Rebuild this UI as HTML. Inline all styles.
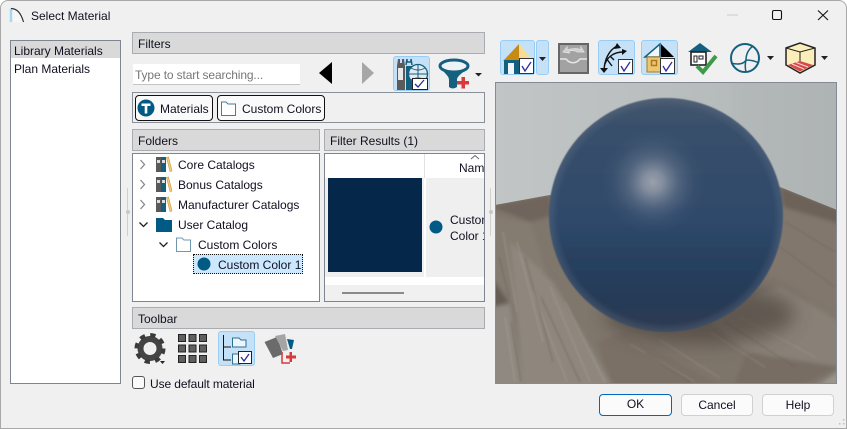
<!DOCTYPE html>
<html><head><meta charset="utf-8"><style>
html,body{margin:0;padding:0;width:847px;height:429px;overflow:hidden;background:#fff}
*{box-sizing:border-box}
body{font:12px "Liberation Sans",sans-serif;color:#101020;position:relative}
#w{position:absolute;left:0;top:0;width:847px;height:429px;background:#f0f0f0;border:1px solid #a8a8a8;border-radius:8px 8px 0 0;overflow:hidden}
.a{position:absolute}
.t{position:absolute;white-space:nowrap;line-height:14px}
.h{position:absolute;background:#d9d9d9;border:1px solid #a9adb1;height:22px;padding:4px 0 0 5px;line-height:14px}
.b{position:absolute;background:#fff;border:1px solid #7d8590}
.on{position:absolute;background:#c5e1f8;border:1px solid #98cdf5;border-radius:3px}
.btn{position:absolute;top:394px;height:22px;background:#fbfbfb;border:1px solid #d0d0d0;border-radius:4px;text-align:center;line-height:20px}
svg{position:absolute;overflow:visible}
</style></head><body>
<div style="position:absolute;inset:0;background:#fff"></div>
<div id="w"></div>

<svg style="left:0;top:0" width="847" height="429">
<path d="M11 8.500C17 8.500 21 13 23.500 22H11Z" fill="#f6f6f6"/>
<path d="M11 8.500V22" stroke="#a6d8f2" stroke-width="2.500" fill="none"/>
<path d="M11 8.500C17 8.500 21 13 23.500 22" stroke="#333" stroke-width="1.200" fill="none"/>
<path d="M727 15H738" stroke="#cccccc"/>
<rect x="772.500" y="10.500" width="9" height="9" rx="1.500" fill="none" stroke="#111" stroke-width="1.100"/>
<path d="M818 10.500L828 20M828 10.500L818 20" stroke="#111" stroke-width="1.100" fill="none"/>
</svg>
<div class="t" style="left:31px;top:9px">Select Material</div>

<!-- left list -->
<div class="b" style="left:10px;top:40px;width:111px;height:344px"></div>
<div class="a" style="left:11px;top:41px;width:109px;height:17px;background:#d9d9d9"></div>
<div class="t" style="left:14px;top:44px">Library Materials</div>
<div class="t" style="left:14px;top:62px">Plan Materials</div>
<div class="a" style="left:127px;top:188px;width:1px;height:48px;background:#d0d0d0"></div>
<div class="a" style="left:126px;top:210px;width:4px;height:4px;border-radius:2px;background:#c8c8c8"></div>

<!-- Filters -->
<div class="h" style="left:132px;top:32px;width:353px">Filters</div>
<div class="a" style="left:133px;top:64px;width:167px;height:21px;background:#fff;border-bottom:1px solid #c4c4c4"></div>
<div class="t" style="left:135px;top:68px;color:#777;letter-spacing:-.13px">Type to start searching...</div>
<svg style="left:0;top:0" width="847" height="429">
<path d="M319 73L332 62V84Z" fill="#000"/>
<path d="M374 73L362 62V84Z" fill="#a6a6a6"/>
</svg>
<div class="on" style="left:393px;top:56px;width:37px;height:35px"></div>
<svg style="left:393px;top:56px" width="37" height="35">
<path d="M4 10L5 3H7V7H9V3H11L12 10V34H4Z" fill="#5b5b5b"/><rect x="5" y="12" width="5" height="12" fill="#e8e8e8"/>
<path d="M13 10V34H19V10Z" fill="#15607f"/><path d="M13 9L14 3V6H18V3L19 9" stroke="#15607f" fill="none" stroke-width="1.500"/>
<circle cx="25" cy="18" r="9.500" fill="#dfeaf2" stroke="#15607f" stroke-width="1.300"/><path d="M16 18H34M25 8V28M18 12Q25 16 32 12M18 24Q25 20 32 24" stroke="#15607f" fill="none"/>
<rect x="19.500" y="22.500" width="15" height="11" fill="#fff" stroke="#222"/><path d="M22 28L25 31L31 24" stroke="#2d2d9a" stroke-width="1.300" fill="none"/>
</svg>
<svg style="left:439px;top:57px" width="46" height="35">
<path d="M1 9C5 17 10 18 10 23V30Q13.500 33 18 30V23C18 18 25 16 30 9Z" fill="#15607f"/>
<ellipse cx="15" cy="9" rx="14" ry="6" fill="#eef3f6" stroke="#15607f" stroke-width="3"/>
<path d="M18 24H22.500V20H26V24H30V27.500H26V31.500H22.500V27.500H18Z" fill="#d8393a"/>
<path d="M36 16H43L39.500 19.500Z" fill="#222"/>
</svg>

<!-- chips -->
<div class="a" style="left:132px;top:92px;width:353px;height:31px;border:1px solid #8a9097"></div>
<div class="a" style="left:135px;top:95px;width:78px;height:26px;background:#fafafa;border:1.500px solid #111;border-radius:4px"></div>
<svg style="left:0;top:0" width="847" height="429">
<circle cx="146" cy="108" r="8.500" fill="#005a84"/>
<path d="M141.500 103.500H150.500V106H147.300V113.500H144.700V106H141.500Z" fill="#fff"/>
</svg>
<div class="t" style="left:160px;top:102px">Materials</div>
<div class="a" style="left:217px;top:95px;width:108px;height:26px;background:#fafafa;border:1.500px solid #111;border-radius:4px"></div>
<svg style="left:0;top:0" width="847" height="429">
<path d="M221.500 115.500V102H226L228 104H235.500V115.500Z" fill="#fff" stroke="#3f7f9f"/>
</svg>
<div class="t" style="left:242px;top:102px">Custom Colors</div>

<!-- Folders -->
<div class="h" style="left:132px;top:129px;width:188px">Folders</div>
<div class="b" style="left:132px;top:153px;width:188px;height:149px"></div>
<svg style="left:0;top:0" width="847" height="429">
<path d="M140.500 160L144.500 164.500L140.500 169M140.500 180L144.500 184.500L140.500 189M140.500 200L144.500 204.500L140.500 209" stroke="#888" stroke-width="1.300" fill="none"/>
<path d="M139.500 222.500L143.500 226.500L147.500 222.500M159.500 242.500L163.500 246.500L167.500 242.500" stroke="#222" stroke-width="1.300" fill="none"/>
<g id="bk"><rect x="156" y="157" width="5" height="15" fill="#5a5a5a"/><rect x="157" y="160" width="3" height="3" fill="#ddd"/><rect x="161" y="157" width="5" height="15" fill="#15607f"/><rect x="162" y="160" width="3" height="3" fill="#ddd"/><path d="M166.500 157.500L168.500 157L172 171L170 171.500Z" fill="#f0cf80" stroke="#c8963c" stroke-width=".6"/></g>
<use href="#bk" y="20"/><use href="#bk" y="40"/>
<path d="M156 218H163L165 220H172V232H156Z" fill="#005a84"/>
<path d="M176.500 251.500V238H182L184 240H190.500V251.500Z" fill="#fff" stroke="#6f98ae"/>
</svg>
<div class="t" style="left:178px;top:158px">Core Catalogs</div>
<div class="t" style="left:178px;top:178px">Bonus Catalogs</div>
<div class="t" style="left:178px;top:198px">Manufacturer Catalogs</div>
<div class="t" style="left:178px;top:218px">User Catalog</div>
<div class="t" style="left:198px;top:238px">Custom Colors</div>
<div class="a" style="left:193px;top:254px;width:110px;height:20px;background:#cce8ff;border:1px dotted #111"></div>
<svg style="left:0;top:0" width="847" height="429"><circle cx="204" cy="264" r="6.500" fill="#005a84"/></svg>
<div class="t" style="left:218px;top:258px">Custom Color 1</div>

<!-- Results -->
<div class="h" style="left:324px;top:129px;width:161px">Filter Results (1)</div>
<div class="b" style="left:324px;top:153px;width:161px;height:149px;overflow:hidden">
  <div class="a" style="left:99px;top:0;width:1px;height:24px;background:#e2e2e2"></div>
  <div class="a" style="left:0;top:24px;width:99px;height:99px;background:#efefef"></div>
  <div class="a" style="left:101px;top:24px;width:58px;height:99px;background:#efefef"></div>
  <div class="a" style="left:3px;top:24px;width:94px;height:94px;background:#05274a"></div>
  <div class="a" style="left:0;top:131px;width:159px;height:16px;background:#f0f0f0"></div>
  <div class="a" style="left:17px;top:138px;width:62px;height:2px;background:#8a8a8a"></div>
  <div class="t" style="left:134px;top:7px">Name</div>
  <div class="t" style="left:125px;top:58px;line-height:16px">Custom<br>Color 1</div>
  <svg style="left:0;top:0" width="159" height="147"><circle cx="111" cy="73" r="6.500" fill="#005a84"/><path d="M146 5L150 1.500L154 5" stroke="#666" fill="none"/></svg>
</div>
<div class="a" style="left:490px;top:188px;width:1px;height:48px;background:#d0d0d0"></div>
<div class="a" style="left:489px;top:210px;width:4px;height:4px;border-radius:2px;background:#c8c8c8"></div>

<!-- Toolbar -->
<div class="h" style="left:132px;top:307px;width:353px">Toolbar</div>
<svg style="left:0;top:0" width="847" height="429">
<circle cx="150" cy="348.500" r="9.500" fill="none" stroke="#444" stroke-width="6"/>
<circle cx="150" cy="348.500" r="13.500" fill="none" stroke="#3a3a3a" stroke-width="4" stroke-dasharray="5.300 5.300"/>
<path d="M160 361H165L162.500 364Z" fill="#222"/>
<g fill="#5f5f5f" stroke="#222"><rect x="178.500" y="334.500" width="7" height="7"/><rect x="189" y="334.500" width="7" height="7"/><rect x="199.500" y="334.500" width="7" height="7"/><rect x="178.500" y="345" width="7" height="7"/><rect x="189" y="345" width="7" height="7"/><rect x="199.500" y="345" width="7" height="7"/><rect x="178.500" y="355.500" width="7" height="7"/><rect x="189" y="355.500" width="7" height="7"/><rect x="199.500" y="355.500" width="7" height="7"/></g>
</svg>
<div class="on" style="left:218px;top:331px;width:37px;height:35px"></div>
<svg style="left:0;top:0" width="847" height="429">
<path d="M223.500 335V360H231M223.500 347H231" stroke="#111" fill="none"/>
<path d="M232.500 347V338H239L241 340H246V347Z" fill="#ecf5fb" stroke="#2a7092"/>
<path d="M232.500 364V354H240V364Z" fill="#ecf5fb" stroke="#2a7092"/>
<rect x="238.500" y="351.500" width="13" height="12" fill="#fff" stroke="#222"/>
<path d="M241 357L244 361L249 354" stroke="#2d2d9a" stroke-width="1.300" fill="none"/>
<path d="M264.500 342L277 337L283 354L273 358Z" fill="#6b6b6b"/>
<path d="M275 336L285 334L288 350L283 351Z" fill="#a5a5a5"/>
<path d="M287 339L294 340L292 349L290 349Z" fill="#005a84"/>
<path d="M282 352V363H290" stroke="#d43a3a" stroke-width="1.500" fill="none"/>
<path d="M286 355.500H289.500V352H292V355.500H296V358.500H292V362H289.500V358.500H286Z" fill="#d8393a"/>
</svg>
<div class="a" style="left:132px;top:376px;width:13px;height:13px;background:#fafafa;border:1px solid #555;border-radius:3px"></div>
<div class="t" style="left:150px;top:377px;letter-spacing:-.1px">Use default material</div>

<!-- top right toolbar -->
<div class="on" style="left:500px;top:40px;width:35px;height:35px"></div>
<div class="on" style="left:536px;top:40px;width:13px;height:35px"></div>
<svg style="left:0;top:0" width="847" height="429">
<path d="M503 61L519 44V61Z" fill="#c98a12"/>
<path d="M519 44L534 61H519Z" fill="#f5dc9c"/>
<rect x="504" y="60" width="16" height="14" fill="#15607f"/><rect x="508" y="63" width="6" height="11" fill="#f0f6fa"/>
<rect x="519.500" y="58.500" width="14" height="15" fill="#fff" stroke="#333"/>
<path d="M522 66L525 71L531 62" stroke="#2d2d9a" stroke-width="1.300" fill="none"/>
<path d="M539 57H546L542.500 61Z" fill="#222"/>
<rect x="559" y="44" width="29" height="29" fill="#a2a2a2" stroke="#666" stroke-width="2"/>
<path d="M563 52L567 47V50C574 48 578 48 581 50V47L584 52H578C574 50 570 50 568 52L570 53Z" fill="#ccc" stroke="#ddd"/>
<path d="M560 59H566C570 64 576 64 580 59H587" fill="none" stroke="#e6e6e6" stroke-width="1.500"/>
</svg>
<div class="on" style="left:598px;top:40px;width:37px;height:35px"></div>
<svg style="left:0;top:0" width="847" height="429">
<path d="M604 72C604 60 609 50 617 46M605 64C607 58 613 52 623 52M606 58L612 66M610 56L614 60" stroke="#111" stroke-width="1.400" fill="none"/>
<path d="M617 43L621 48L614 49ZM627 51L622 55V49ZM600 68H608L604 73Z" fill="#111"/>
<rect x="618.500" y="59.500" width="14" height="14" fill="#fff" stroke="#333"/>
<path d="M621 66L624 71L630 62" stroke="#2d2d9a" stroke-width="1.300" fill="none"/>
</svg>
<div class="on" style="left:641px;top:40px;width:37px;height:35px"></div>
<svg style="left:0;top:0" width="847" height="429">
<path d="M645 57L660 44V57Z" fill="#f0f6fa" stroke="#15607f" stroke-width="1.500"/>
<path d="M661 44L674 57H661Z" fill="#000"/>
<rect x="647" y="57" width="14" height="15" fill="#eec672" stroke="#a87a20"/>
<rect x="651.500" y="60.500" width="5" height="5" fill="#eec672" stroke="#a87a20" stroke-width="1.500"/>
<rect x="660.500" y="58.500" width="14" height="15" fill="#fff" stroke="#333"/>
<path d="M663 66L666 71L672 62" stroke="#2d2d9a" stroke-width="1.300" fill="none"/>
<path d="M688 52L700 43L712 52Z" fill="#15607f"/>
<rect x="691" y="52" width="15" height="13" fill="#fff" stroke="#222" stroke-width="1.600"/>
<path d="M694 56H697V62H694ZM699 56H703V59H699Z" fill="none" stroke="#222"/>
<path d="M697 66L703 72L716 56" stroke="#3c9a48" stroke-width="4" fill="none"/>
<circle cx="745" cy="58" r="14" fill="none" stroke="#15607f" stroke-width="2"/>
<path d="M731 63C738 65 744 64 746 60C746 54 749 49 753 46M746 60C752 60 757 62 759 63M746 60C745 64 745 68 746 72" stroke="#15607f" stroke-width="1.500" fill="none"/>
<path d="M767 56H774L770.500 60Z" fill="#222"/>
<path d="M786 48L800 43L815 48V65L800 73L786 65Z" fill="#fbeebb" stroke="#222" stroke-width="1.500"/>
<path d="M786 48L800 52L815 48M800 52V63" stroke="#222" fill="none"/>
<path d="M788 65L800 61L813 65L800 71.500Z" fill="#d84848"/>
<path d="M792 64L804 69M796 62.500L808 67" stroke="#f8d8d8"/>
<path d="M821 56H828L824.500 60Z" fill="#222"/>
</svg>

<!-- preview -->
<svg style="left:495px;top:82px" width="342" height="302" viewBox="0 0 342 302">
<defs>
<linearGradient id="wl" x1="0" y1="0" x2="1" y2="0"><stop offset="0" stop-color="#c1c5c5"/><stop offset=".68" stop-color="#b6bbbb"/><stop offset=".7" stop-color="#b3b8b9"/><stop offset="1" stop-color="#aeb3b4"/></linearGradient>
<linearGradient id="sg" x1="0" y1="0" x2="0" y2="1"><stop offset="0" stop-color="#44566d"/><stop offset=".12" stop-color="#39506c"/><stop offset=".5" stop-color="#2f4a6b"/><stop offset=".8" stop-color="#253c5a"/><stop offset="1" stop-color="#2c3a50"/></linearGradient>
<radialGradient id="hl" gradientUnits="userSpaceOnUse" cx="158" cy="100" r="52"><stop offset="0" stop-color="#a0a5af" stop-opacity=".95"/><stop offset=".2" stop-color="#969dab" stop-opacity=".8"/><stop offset=".5" stop-color="#7b879b" stop-opacity=".4"/><stop offset=".8" stop-color="#5f708a" stop-opacity=".12"/><stop offset="1" stop-color="#5a6c85" stop-opacity="0"/></radialGradient>
<radialGradient id="rim" gradientUnits="userSpaceOnUse" cx="171" cy="133" r="117"><stop offset=".92" stop-color="#6a7688" stop-opacity="0"/><stop offset="1" stop-color="#6a7688" stop-opacity=".35"/></radialGradient>
<clipPath id="fl"><path d="M0 123L55 113L200 85L285 105L342 128V302H0Z"/></clipPath>
<filter id="bl" x="-30%" y="-60%" width="160%" height="220%"><feGaussianBlur stdDeviation="9"/></filter>
<filter id="bs"><feGaussianBlur stdDeviation="2"/></filter>
<filter id="bg"><feGaussianBlur stdDeviation=".8"/></filter>
<filter id="b0"><feGaussianBlur stdDeviation=".5"/></filter>
</defs>
<rect width="342" height="302" fill="url(#wl)"/>
<g clip-path="url(#fl)">
<rect y="70" width="342" height="232" fill="#7f766c"/>
<g filter="url(#bs)">
<path d="M-5 124L55 113L58 133L35 140Z" fill="#6f655b"/>
<path d="M-5 135L35 140L45 170L60 230L15 221L-5 193Z" fill="#857b71"/>
<path d="M-5 193L15 221L-5 226Z" fill="#665d54"/>
<path d="M-5 226L15 221L28 305H-5Z" fill="#8f8981"/>
<path d="M15 160L58 200L118 305H28Z" fill="#8f877e"/>
<path d="M102 260L128 250L228 305H118Z" fill="#7a6f65"/>
<path d="M128 250L205 232L252 270L238 305L228 305Z" fill="#7e746a"/>
<path d="M205 232L285 205L345 240V285L252 270Z" fill="#898177"/>
<path d="M252 270L345 285L305 305H238Z" fill="#776d63"/>
<path d="M285 105L345 128V142L288 125Z" fill="#6c6259"/>
<path d="M285 125L345 142V232L270 190Z" fill="#82776d"/>
<path d="M320 305L345 288V305Z" fill="#9a948c"/>
</g>
<g filter="url(#bg)" fill="none" stroke-width="2">
<path d="M8 150L22 230M22 160L48 260M10 235L20 300M38 210L72 300M55 205L95 300M70 220L110 300" stroke="#a8a29a" opacity=".28"/>
<path d="M4 175L14 215M30 175L58 280M46 215L85 300M16 240L26 300" stroke="#5f564d" opacity=".25"/>
<path d="M135 262L200 300M165 258L225 296M215 250L270 285M245 235L320 275" stroke="#a39c93" opacity=".22"/>
<path d="M150 270L195 300M230 240L300 285M290 140L340 170M285 165L340 205" stroke="#5f564d" opacity=".2"/>
</g>
<ellipse cx="205" cy="232" rx="95" ry="30" fill="#3f3832" opacity=".55" filter="url(#bl)"/>
</g>
<g filter="url(#b0)">
<circle cx="171" cy="133" r="117" fill="url(#sg)"/>
<circle cx="171" cy="133" r="117" fill="url(#rim)"/>
</g>
<circle cx="158" cy="100" r="52" fill="url(#hl)"/>
<rect x=".5" y=".5" width="341" height="301" fill="none" stroke="#858b96"/>
</svg>

<!-- buttons -->
<div class="btn" style="left:599px;width:73px;border:1.500px solid #0067c0;line-height:19px">OK</div>
<div class="btn" style="left:681px;width:72px">Cancel</div>
<div class="btn" style="left:762px;width:72px">Help</div>
<svg style="left:0;top:0" width="847" height="429"><g fill="#bbb"><rect x="843" y="419" width="1.500" height="1.500"/><rect x="843" y="423" width="1.500" height="1.500"/><rect x="839" y="423" width="1.500" height="1.500"/></g></svg>
</body></html>
